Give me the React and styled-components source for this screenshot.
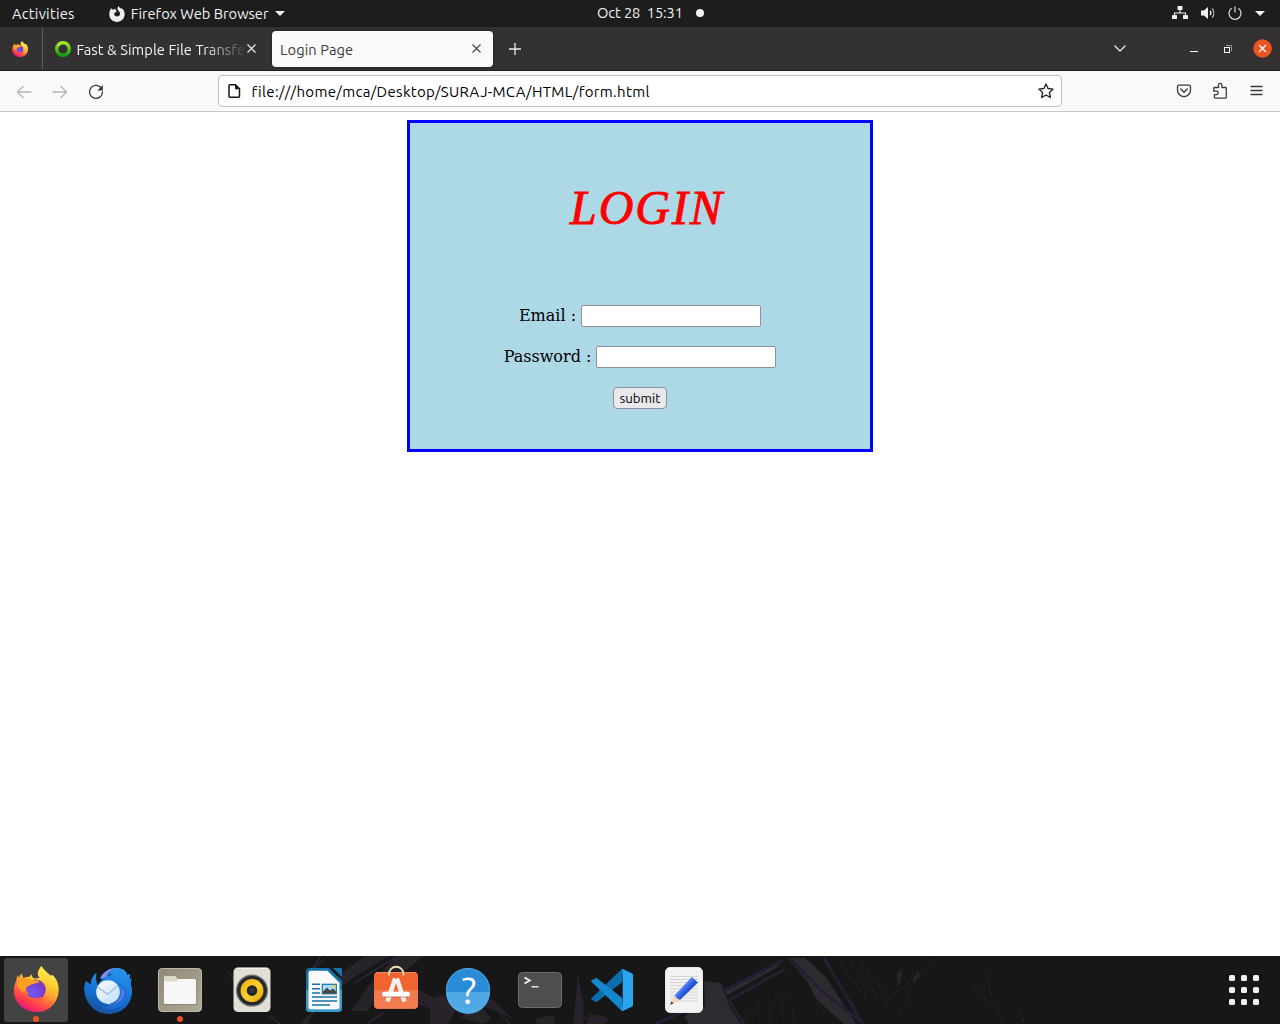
import React, { useId } from 'react';
import styled, { createGlobalStyle } from 'styled-components';

const GlobalStyle = createGlobalStyle`
  *, *::before, *::after { box-sizing: border-box; }
  body { margin: 0; background: #fff; font-family: Ubuntu, "Noto Sans", sans-serif; }
  svg { display: block; }
`;

const Desktop = styled.div`
  width: 1280px;
  height: 1024px;
  display: flex;
  flex-direction: column;
  overflow: hidden;
`;

const Label = styled.span`
  font-size: ${(p) => p.$size || 14}px;
  letter-spacing: ${(p) => p.$spacing || 0}px;
  line-height: 20px;
  white-space: pre;
  color: ${(p) => p.$color || '#f2f2f2'};
`;

/* ---------- System bar ---------- */

const SystemBar = styled.header`
  height: 27px;
  flex: none;
  background: #1d1d1d;
  display: grid;
  grid-template-columns: 597px 1fr 108px;
  align-items: center;
`;

const SystemLeft = styled.div`
  display: flex;
  align-items: center;
  padding-left: 12px;
`;

const AppMenu = styled.div`
  display: flex;
  align-items: center;
  gap: 6px;
  margin-left: 34px;
`;

const Clock = styled.div`
  display: flex;
  align-items: center;
  padding-bottom: 1px;
`;

const Dot = styled.i`
  width: 8px;
  height: 8px;
  border-radius: 50%;
  background: #f2f2f2;
  margin-left: 13px;
`;

const Tray = styled.div`
  display: flex;
  align-items: center;
  gap: 12.5px;
  padding-bottom: 1px;
`;

const Caret = () => (
  <svg width="10" height="5" viewBox="0 0 10 5"><path d="M0 0h10L5 5z" fill="#f2f2f2" /></svg>
);

/* ---------- Browser tabs ---------- */

const TabStrip = styled.nav`
  height: 44px;
  flex: none;
  background: #333132;
  border-bottom: 1px solid #1f1d1e;
  display: flex;
  align-items: center;
`;

const PinnedTab = styled.div`
  width: 43px;
  height: 43px;
  border-right: 1px solid #5b595a;
  display: flex;
  align-items: center;
  padding-left: 12px;
`;

const Tab = styled.div`
  display: flex;
  align-items: center;
  width: ${(p) => p.$width}px;
  height: 36px;
  margin-left: ${(p) => (p.$active ? 5 : 4)}px;
  padding: 0 ${(p) => (p.$active ? 12 : 11)}px 0 8px;
  border-radius: 4px;
  background: ${(p) => (p.$active ? '#f9f9f9' : 'transparent')};
  box-shadow: ${(p) => (p.$active ? '0 0 3px rgba(0,0,0,.5)' : 'none')};
`;

const TabTitle = styled.div`
  flex: 1;
  min-width: 0;
  height: 20px;
  display: flex;
  overflow: hidden;
  margin: 2px 3px 0 ${(p) => (p.$indent ? 5.5 : 0)}px;
  mask-image: ${(p) => (p.$fade ? 'linear-gradient(90deg,#000 76%,transparent 102%)' : 'none')};
`;

const Spacer = styled.div`
  flex: 1;
`;

const NewTab = styled.div`
  width: 43px;
  display: flex;
  justify-content: center;
`;

const WindowButtons = styled.div`
  display: flex;
  align-items: center;
  width: 103px;
  margin-left: 51px;
`;

const WindowButton = styled.button`
  width: 34px;
  height: 20px;
  padding: 0;
  border: 0;
  background: none;
  display: flex;
  align-items: center;
  justify-content: center;
`;

/* ---------- Toolbar ---------- */

const Toolbar = styled.div`
  height: 41px;
  flex: none;
  background: #f9f9f9;
  border-bottom: 1px solid #c8c8c8;
  display: flex;
  align-items: center;
  padding: 0 6px;
`;

const ToolButton = styled.button`
  width: 36px;
  height: 32px;
  border: 0;
  padding: ${(p) => p.$drop || 0}px 0 0;
  background: none;
  display: flex;
  align-items: center;
  justify-content: center;
`;

const UrlBar = styled.div`
  flex: 1;
  height: 32px;
  margin: 0 104px;
  padding: 0 7px 0 8px;
  border: 1px solid #bfbfbf;
  border-radius: 4px;
  background: #fff;
  display: flex;
  align-items: center;
`;

const UrlText = styled.div`
  flex: 1;
  display: flex;
  margin-left: 9.5px;
  padding-top: 1px;
`;

/* ---------- Page ---------- */

const Page = styled.main`
  flex: 1;
  background: #fff;
  padding-top: 8px;
`;

const LoginForm = styled.form`
  width: 466px;
  height: 332px;
  margin: 0 auto;
  border: 3px solid #00f;
  background: #add8e6;
  display: flex;
  flex-direction: column;
  align-items: center;
  font: 16px "DejaVu Serif", serif;
  color: #000;
`;

const Title = styled.h1`
  margin: 55px 0 67px 14px;
  font: italic 400 48px/60px Z003, "URW Chancery L", "Liberation Serif", serif;
  letter-spacing: 2px;
  color: #f00;
  -webkit-text-stroke: 0.9px #f00;
`;

const Field = styled.label`
  display: flex;
  align-items: center;
  gap: 5px;
  height: 22px;
  margin-bottom: 19px;
  line-height: 20px;
`;

const FieldText = styled.span`
  white-space: nowrap;
`;

const Input = styled.input`
  width: 180px;
  height: 22px;
  border: 1px solid #8f8f9d;
  border-radius: 2px;
  background: #fff;
  outline: none;
`;

const Submit = styled.button`
  width: 54px;
  height: 22px;
  padding: 1px 0 0;
  border: 1px solid #8f8f9d;
  border-radius: 4px;
  background: #e9e9ed;
  font: 13.33px/19px Ubuntu, "Noto Sans", sans-serif;
  color: #000;
`;

/* ---------- Dock ---------- */

const Dock = styled.footer`
  position: relative;
  height: 68px;
  flex: none;
  background: #171717;
  display: flex;
  align-items: center;
  padding: 0 4px;
  gap: 8px;
`;

const Wallpaper = styled.svg`
  position: absolute;
  inset: 0;
`;

const DockItem = styled.div`
  position: relative;
  width: 64px;
  height: 64px;
  border-radius: 3px;
  background: ${(p) => (p.$active ? '#434343' : 'transparent')};
  &::after {
    content: '';
    display: ${(p) => (p.$running ? 'block' : 'none')};
    position: absolute;
    left: 29px;
    bottom: 0;
    width: 6px;
    height: 6px;
    border-radius: 50%;
    background: #e95420;
  }
`;

const AppGrid = styled.div`
  position: relative;
  display: grid;
  grid-template-columns: repeat(3, 6px);
  gap: 6px;
  margin: 0 17px 0 auto;
`;

const GridDot = styled.i`
  height: 6px;
  border-radius: 1.5px;
  background: #f0f0f0;
`;

function FirefoxLogo({ size = 64, box = '0 0 64 64' }) {
  const id = useId().replace(/[^a-zA-Z0-9]/g, '');
  return (
    <svg width={size} height={size} viewBox={box}>
      <defs>
        <linearGradient id={`${id}a`} x1=".8" y1=".1" x2=".25" y2=".95">
          <stop offset="0" stopColor="#fff44f" /><stop offset=".3" stopColor="#ffbd2e" />
          <stop offset=".55" stopColor="#ff7139" /><stop offset=".8" stopColor="#ff3750" /><stop offset="1" stopColor="#e31587" />
        </linearGradient>
        <linearGradient id={`${id}b`} x1=".5" y1="0" x2=".3" y2="1">
          <stop offset="0" stopColor="#fff44f" /><stop offset=".5" stopColor="#ffcb34" /><stop offset="1" stopColor="#ff7b35" />
        </linearGradient>
        <radialGradient id={`${id}c`} cx=".35" cy=".65" r=".8">
          <stop offset="0" stopColor="#7059f5" /><stop offset=".6" stopColor="#7740cf" /><stop offset="1" stopColor="#a12b9f" />
        </radialGradient>
      </defs>
      <path d="M17.9 15.3c.1 2.4.8 3.4 1.7 4.6 2.1-1 4.5-1.4 6.1-1.1.3-1.2 1-2.1 1.8-2.6.2 2 .9 3.4 2.6 4.3l10-1 8.500-2.600c4 4.500 6 8.800 6 14.500C54.600 44.600 45 54 32.500 54S9.800 44.600 9.800 32.200c0-3.500 1-7.200 2.500-9.500.3-2.500.8-4.200 1.800-5.600l.8 3c.7-2 1.700-3.500 3-4.800z" fill={`url(#${id}a)`} />
      <circle cx="31.700" cy="31.600" r="10.200" fill={`url(#${id}c)`} />
      <path d="M37.700 8c-1.700 1.600-3.600 4.100-3.900 7.500-.3 3.300 3 5.500 5.500 8.500 3.500 4.100 3.600 9.300.7 13.500 3-1 4.600-3 5.300-4.600.5 4.500-2 9.500-7.300 12 6.500-.7 13.100-4.600 16-10.700C55.500 27 52.700 21 48.200 16.800c.4 1.600.5 2.600.3 3.700C46.400 15.700 40.600 14 37.700 8z" fill={`url(#${id}b)`} />
      <path d="M15 22c4-2.800 8-2.600 11.500-.3 1.200.3 3.200.2 9 1.200-.4 2.400-5.400 2.400-8.500 3.500-1 1.700-3.700 1-4.600 3.100-.7 2.300.6 5.400 2.800 6.500-4.500-.2-8.400-2.500-10.900-6.800-1.500-2.500-1.700-5.300.7-7.200z" fill="#ffa024" />
      <path d="M22.400 29.500c-1.800 6 3.100 11.200 9.100 10.700 2.700-.2 4.500-1.300 6.500-1.100-1.900 3.500-8.400 5-13 2.200-4.300-2.600-5.400-7.600-2.600-11.800z" fill="#ff5a38" />
    </svg>
  );
}

function Thunderbird() {
  return (
    <svg width="64" height="64" viewBox="0 0 64 64">
      <defs>
        <linearGradient id="tbBody" x1=".7" y1="0" x2=".4" y2="1"><stop offset="0" stopColor="#2795ee" /><stop offset=".55" stopColor="#1673d8" /><stop offset="1" stopColor="#15529e" /></linearGradient>
        <linearGradient id="tbMail" x1="0" y1="0" x2="1" y2="1"><stop offset="0" stopColor="#fff" /><stop offset="1" stopColor="#b9dcfa" /></linearGradient>
      </defs>
      <path d="M20.500 14.700c-4 3-6 7.300-5.600 12L10 22.800C8.200 26 7.600 31 8.700 35.500 10.800 47 20 56 32.500 56 46 56 56 46 56 33c0-2.400-.4-4.400-1.300-7l1-6-2 1.400.4-5.500-2.700 1.100c-1-5-6.200-7.300-11.900-7-6.800.4-10.900 4.200-12.500 9.200L24 20.500l3 .6c-2.500 1.600-4 3.500-5 6.200C20 24 19.700 20 20.500 14.700z" fill="url(#tbBody)" />
      <path d="M24 20.600c2.500-6 7.500-9.800 14.500-10.400-4.500 1.700-8 4.600-9 8.800-1 .2-3 1-5.500 1.600z" fill="#8f8cf0" />
      <path d="M40 25c9 3 8 15-3 22-3 1.700-7 2.500-11 .6 4 5 15 4.600 21-1.600 8-8 3.500-19-7-21z" fill="#1c6ed2" />
      <path d="M44 30c5 5-1 14-9 17 8-1 15-8 13-15z" fill="#8981e9" opacity=".65" />
      <circle cx="32" cy="34" r="11.800" fill="url(#tbMail)" />
      <path d="M21.500 29l10.200 7.400 10.200-9" fill="none" stroke="#9dbfe2" strokeWidth="1.300" />
      <path d="M27 43c2 2.200 4.500 3.300 8 3.700-2-1.700-3-3-3.500-4.700z" fill="#c9e3fb" />
      <circle cx="33.500" cy="16.500" r="1.400" fill="#103a80" /><circle cx="33" cy="16" r=".5" fill="#fff" />
    </svg>
  );
}

function Files() {
  return (
    <svg width="64" height="64" viewBox="0 0 64 64">
      <defs><linearGradient id="fileBg" x1="0" y1="0" x2="1" y2="1"><stop stopColor="#8f8878" /><stop offset="1" stopColor="#b1a996" /></linearGradient></defs>
      <rect x="10" y="10" width="44" height="44" rx="4.500" fill="url(#fileBg)" />
      <rect x="10.500" y="10.500" width="43" height="43" rx="4" fill="none" stroke="#c0b9a8" />
      <path d="M17 18h10l3 3h8v5H16v-7z" fill="#dedacb" />
      <path d="M16 24h13l3-3h15a1.500 1.500 0 011.500 1.500v23A1.500 1.500 0 0147 47H17.500a1.500 1.500 0 01-1.500-1.500z" fill="#6f695c" opacity=".5" />
      <path d="M16 23.500h12l3-2.500h15.500a1.500 1.500 0 011.500 1.500v22a1.500 1.500 0 01-1.500 1.500h-29a1.500 1.500 0 01-1.500-1.500z" fill="#f8f7f7" />
    </svg>
  );
}

function Speaker() {
  return (
    <svg width="64" height="64" viewBox="0 0 64 64">
      <defs><linearGradient id="spYel" x1="0" y1="0" x2="1" y2="1"><stop stopColor="#e9ae00" /><stop offset=".5" stopColor="#fbd034" /><stop offset="1" stopColor="#dda100" /></linearGradient></defs>
      <rect x="13.500" y="9.500" width="37" height="44.500" rx="4.500" fill="#e2dfd6" />
      <path d="M17 10.300h30" stroke="#fbfaf6" />
      <circle cx="32" cy="32.600" r="16" fill="#6d6d70" /><circle cx="32" cy="32.600" r="14.700" fill="#28282c" />
      <circle cx="32" cy="32.600" r="11.500" fill="url(#spYel)" />
      <circle cx="32" cy="32.600" r="5.300" fill="#242426" /><circle cx="32" cy="32.600" r="2.500" fill="#35353a" />
    </svg>
  );
}

function Writer() {
  return (
    <svg width="64" height="64" viewBox="0 0 64 64">
      <path d="M18 10h19l13 13v27a4 4 0 01-4 4H18a4 4 0 01-4-4V14a4 4 0 014-4z" fill="#156fa8" />
      <path d="M14 32h36v18a4 4 0 01-4 4H18a4 4 0 01-4-4z" fill="#3d9bcb" />
      <path d="M41 10h7.500a1.500 1.500 0 011.500 1.500V19z" fill="#1674aa" />
      <path d="M19 12.700h16.500l12 12V49a2.300 2.300 0 01-2.300 2.300H18.800A2.300 2.300 0 0116.500 49V15a2.300 2.300 0 012.500-2.300z" fill="#fafafa" />
      <path d="M20 26.300h8M20 30.700h8M20 35h8M20 39h25M20 43h25M20 47h18" stroke="#1672a8" strokeWidth="1.600" />
      <rect x="30.300" y="26.300" width="14" height="9.500" fill="#a9dcf4" stroke="#1672a8" strokeWidth="1.200" />
      <path d="M31 35.400v-2l4-4 3 3 3-2 3 3v2z" fill="#474747" /><path d="M41 27h3v3a3 3 0 01-3-3z" fill="#f4c430" />
    </svg>
  );
}

function Software() {
  return (
    <svg width="64" height="64" viewBox="0 0 64 64">
      <rect x="10" y="14" width="44" height="36.700" rx="4" fill="#f06430" />
      <path d="M10 32h44v14.700a4 4 0 01-4 4H14a4 4 0 01-4-4z" fill="#f27c50" />
      <path d="M12 14.600h40" stroke="#f98b62" />
      <path d="M25 17.500V16a7.200 7.200 0 0114.500 0v1.500" fill="none" stroke="#f2dfb1" strokeWidth="1.900" />
      <path d="M31.200 20.500L23.500 43.500M32.800 20.500L40.500 43.500" fill="none" stroke="#f7f1ee" strokeWidth="4.600" />
      <rect x="18" y="33.800" width="28" height="5" rx="2.500" fill="#fff" />
      <path d="M20 39h24" stroke="#bd5532" strokeWidth=".6" />
    </svg>
  );
}

function Help() {
  return (
    <svg width="64" height="64" viewBox="0 0 64 64">
      <circle cx="32" cy="32" r="22" fill="#2a8bd6" /><path d="M10 34h44a22 22 0 01-44 0z" fill="#50a8e4" />
      <circle cx="32" cy="32" r="21.500" fill="none" stroke="#59b2ea" strokeWidth=".8" />
      <text x="33" y="45.500" textAnchor="middle" fontFamily="Ubuntu, Noto Sans, sans-serif" fontSize="38" fill="#fff">?</text>
    </svg>
  );
}

function Terminal() {
  return (
    <svg width="64" height="64" viewBox="0 0 64 64">
      <rect x="10.500" y="14.500" width="43" height="35" rx="4" fill="#4e4e4e" stroke="#6b6b6b" />
      <path d="M16.500 19.500l5.500 3-5.500 3" fill="none" stroke="#fff" strokeWidth="1.500" />
      <path d="M23.500 28.800h7" stroke="#fff" strokeWidth="1.300" />
    </svg>
  );
}

function Code() {
  return (
    <svg width="64" height="64" viewBox="0 0 64 64">
      <path d="M11.400 40.200L41 11.800c.6-.6 1.500-.8 2.300-.5L42 24.200 17.300 43.400c-.8.6-1.700.6-2.400 0l-3.500-2c-.5-.4-.5-.8 0-1.200z" fill="#0b6cb0" />
      <path d="M11.400 23.800L41 52.200c.6.6 1.500.8 2.300.5L42 39.800 17.300 20.600c-.8-.6-1.700-.6-2.400 0l-3.500 2c-.5.4-.5.8 0 1.200z" fill="#1587cf" />
      <path d="M43.300 52.800c-.9.3-1.900 0-2.500-.7 1 .8 1.900.2 1.900-1V13c0-1.300-1-1.900-1.900-1 .7-.9 1.700-1.100 2.600-.7l8.300 3.900c.8.400 1.300 1 1.300 2v29.600c0 1-.5 1.600-1.300 2z" fill="#2aa5ee" />
    </svg>
  );
}

function Editor() {
  return (
    <svg width="64" height="64" viewBox="0 0 64 64">
      <rect x="13.500" y="9.500" width="37" height="45" rx="4.500" fill="#f3f3f3" stroke="#fff" strokeWidth=".8" />
      <path d="M18 18.500h28M18 21.500h28M18 24.500h28M18 27.700h28M18 30.800h28M18 34h28M18 37h28M18 40h28M18 43h28" stroke="#ccc" strokeWidth=".8" />
      <path d="M18.200 46.800l4-9.300 5.600 4.500z" fill="#f7d6b6" /><path d="M18.200 46.800l1.300-3.300 2 1.900z" fill="#343434" />
      <path d="M22.500 37.500L39.700 19l3 2.500-17.500 18.800z" fill="#4b7ff3" />
      <path d="M25 40l17.400-18.600 3.600 3L28 42z" fill="#2451cc" /><path d="M24.200 39.200L41.600 20.600l1.800 1.700L26.300 41z" fill="#3265e6" />
    </svg>
  );
}

const dockApps = [
  { name: 'firefox', Icon: FirefoxLogo, active: true, running: true },
  { name: 'mail', Icon: Thunderbird },
  { name: 'files', Icon: Files, running: true },
  { name: 'music', Icon: Speaker },
  { name: 'writer', Icon: Writer },
  { name: 'software', Icon: Software },
  { name: 'help', Icon: Help },
  { name: 'terminal', Icon: Terminal },
  { name: 'code', Icon: Code },
  { name: 'editor', Icon: Editor },
];

const Cross = ({ size = 9, color = '#eee', width = 1.1 }) => (
  <svg width={size} height={size} viewBox="0 0 9 9"><path d="M.5.500l8 8M8.500.500l-8 8" stroke={color} strokeWidth={width} /></svg>
);

const lineProps = { fill: 'none', stroke: '#3a3a40', strokeWidth: 1.3, strokeLinecap: 'round', strokeLinejoin: 'round' };

function TopBar() {
  return (
    <SystemBar>
      <SystemLeft>
        <Label $size={14.67} $spacing={0.26}>Activities</Label>
        <AppMenu>
          <svg width="16" height="16" viewBox="0 0 16 16">
            <path d="M2.300 2.200l1.400 1.500c.7-.4 1.400-.5 2-.4l1-1-.2 2L8 5.300 6.300 6.600c-1 .3-1.300.8-1.100 1.700.3 1.400 1.500 2.200 2.900 2.200 1.800 0 3-1.300 2.900-3-.1-1.500-1-2.200-1.800-3C8 3.300 8.400 1.300 9.700 0c.5 1.700 1.600 2 2.500 3l.3-1c2 1.600 3.200 3.500 3.200 6.300 0 4.400-3.500 7.600-7.700 7.600S.3 12.700.3 8.500c0-2.500.7-4.700 2-6.300z" fill="#eee" />
          </svg>
          <Label $size={14.67}>Firefox Web Browser</Label>
          <Caret />
        </AppMenu>
      </SystemLeft>
      <Clock><Label $size={14.67} $spacing={-0.1}>{'Oct 28  15:31'}</Label><Dot /></Clock>
      <Tray>
        <svg width="16" height="14" viewBox="0 0 16 14">
          <path d="M8 4v3M2.500 10V7h11v3" fill="none" stroke="#f2f2f2" strokeWidth="1.100" />
          <rect x="5.500" y="0" width="5" height="4" rx=".7" fill="#f2f2f2" /><rect x="0" y="9" width="5" height="4" rx=".7" fill="#f2f2f2" /><rect x="11" y="9" width="5" height="4" rx=".7" fill="#f2f2f2" />
        </svg>
        <svg width="15" height="14" viewBox="0 0 15 14">
          <path d="M0 4.500h3L7 1v12L3 9.500H0z" fill="#f2f2f2" />
          <path d="M9 5a3 3 0 010 4.200" fill="none" stroke="#f2f2f2" strokeWidth="1.200" /><path d="M11.200 2.500a7 7 0 010 9" fill="none" stroke="#bbb" strokeWidth="1.200" />
        </svg>
        <svg width="14" height="14" viewBox="0 0 14 14"><path d="M7 .500v6M3.700 2.300a6 6 0 106.600 0" fill="none" stroke="#ddd" strokeWidth="1.200" /></svg>
        <Caret />
      </Tray>
    </SystemBar>
  );
}

function Tabs() {
  return (
    <TabStrip>
      <PinnedTab><FirefoxLogo size={16} box="9 8 46 46" /></PinnedTab>
      <Tab $width={220}>
        <svg width="16" height="16" viewBox="0 0 16 16">
          <defs><linearGradient id="ring" x1="0" y1="0" x2="0" y2="1"><stop stopColor="#a4e62a" /><stop offset="1" stopColor="#169b12" /></linearGradient></defs>
          <circle cx="8" cy="8" r="6.300" fill="none" stroke="url(#ring)" strokeWidth="3.400" /><path d="M3.600 4.800l2-1.800" stroke="#e8fbc5" strokeWidth=".8" />
        </svg>
        <TabTitle $indent $fade><Label $size={14.67} $spacing={0.08}>Fast &amp; Simple File Transfe</Label></TabTitle>
        <Cross />
      </Tab>
      <Tab $width={221} $active>
        <TabTitle><Label $size={14.67} $spacing={0.08} $color="#3b3b3b">Login Page</Label></TabTitle>
        <Cross color="#444" />
      </Tab>
      <NewTab><svg width="12" height="12" viewBox="0 0 12 12"><path d="M6 0v12M0 6h12" stroke="#eee" strokeWidth="1.300" /></svg></NewTab>
      <Spacer />
      <svg width="12" height="7" viewBox="0 0 12 7"><path d="M.500.500L6 6 11.500.500" fill="none" stroke="#e5e5e5" strokeWidth="1.300" /></svg>
      <WindowButtons>
        <WindowButton><svg width="8" height="8" viewBox="0 0 8 8"><path d="M0 6.500h8" stroke="#fff" /></svg></WindowButton>
        <WindowButton>
          <svg width="8" height="8" viewBox="0 0 8 8"><path d="M2 .500h5.500V6" fill="none" stroke="#999" /><rect x=".500" y="2.500" width="5" height="5" fill="none" stroke="#fff" /></svg>
        </WindowButton>
        <WindowButton>
          <svg width="19" height="19" viewBox="0 0 19 19"><circle cx="9.500" cy="9.500" r="9.300" fill="#e95420" /><path d="M6 6l7 7M13 6l-7 7" stroke="#fff" strokeWidth="1.400" /></svg>
        </WindowButton>
      </WindowButtons>
    </TabStrip>
  );
}

function Navigation() {
  return (
    <Toolbar>
      <ToolButton $drop={1}><svg width="16" height="16" viewBox="0 0 16 16"><path d="M15 8H1.500M7 2.500L1.500 8 7 13.500" {...lineProps} stroke="#b5b5b8" /></svg></ToolButton>
      <ToolButton $drop={1}><svg width="16" height="16" viewBox="0 0 16 16"><path d="M1 8h13.500M9 2.500L14.500 8 9 13.500" {...lineProps} stroke="#b5b5b8" /></svg></ToolButton>
      <ToolButton $drop={1}><svg width="16" height="16" viewBox="0 0 16 16"><path d="M12.800 3.500a6.500 6.500 0 101.700 4.500" {...lineProps} /><path d="M14.900 1v5.500H9.400z" fill="#3a3a40" /></svg></ToolButton>
      <UrlBar>
        <svg width="15" height="16" viewBox="0 0 15 16"><path d="M3 1.700h5.500l4 4v7.600a1 1 0 01-1 1H3a1 1 0 01-1-1V2.700a1 1 0 011-1z" fill="none" stroke="#151515" strokeWidth="1.500" /><path d="M8 1.500v4.700h4.700z" fill="#151515" /></svg>
        <UrlText><Label $size={15} $spacing={0.32} $color="#000">file:///home/mca/Desktop/SURAJ-MCA/HTML/form.html</Label></UrlText>
        <svg width="16" height="16" viewBox="0 0 16 16"><path d="M8 .900l2.100 4.600 5 .6-3.700 3.400 1 5L8 12l-4.400 2.500 1-5L.900 6.100l5-.6z" {...lineProps} stroke="#222" /></svg>
      </UrlBar>
      <ToolButton><svg width="16" height="16" viewBox="0 0 16 16"><path d="M3 2.200h10a1.500 1.500 0 011.500 1.500v3.500a6.500 6.500 0 01-13 0V3.700A1.500 1.500 0 013 2.200zM4.700 6L8 9.200 11.300 6" {...lineProps} /></svg></ToolButton>
      <ToolButton><svg width="16" height="18" viewBox="0 0 16 18"><path d="M6.500 5.500V3a1.700 1.700 0 013.400 0v2.500h3.600a.8.800 0 01.8.800v9a.8.800 0 01-.8.800H3.200a.8.800 0 01-.8-.8v-2.600h2a1.700 1.700 0 000-3.500H1.800V6.300a.8.800 0 01.8-.8z" {...lineProps} /></svg></ToolButton>
      <ToolButton><svg width="13" height="12" viewBox="0 0 13 12"><path d="M1 1.500h11M1 5.500h11M1 9.500h11" {...lineProps} /></svg></ToolButton>
    </Toolbar>
  );
}

function DockWallpaper() {
  return (
    <Wallpaper width="1280" height="68" viewBox="0 0 1280 68" fill="none">
      <path d="M228 15l18 28M270 60l10 8M325 3l-18 15" stroke="#26242a" strokeWidth="2" />
      <path d="M300 68l27-28 35-24 28-16h-25l-30 22-28 46zM396 0h28l-37 29-20 26h-16l17-25zM410 30l27 13-2 9-27-12z" fill="#262329" />
      <path d="M309 18l12-18M383 57l-16 11M354 27l44-27M417 46l23 9" stroke="#2c2138" strokeWidth="2" />
      <path d="M430 45l12-7 17 8-10 22h-19zM460 62l19-14 12 15-7 5zM484 50l8-7 20 19zM573 68l5-47 6 28-1 19zM536 63l18-4 1 9h-18zM590 58l17 3-2 7h-18z" fill="#272329" />
      <path d="M486 42l24 26M578 21v47M583 62l26 3" stroke="#2e203a" strokeWidth="1.500" />
      <path d="M704 25l17 2 8 23 12 18h-52l-5-8 21-10zM726 32l55-28-5 8-50 28zM787 2h18l20 18 31 48h-12l-28-25-9-18z" fill="#2d2a30" />
      <path d="M724 35l59-31M731 43l54-30M728 43l16 25M789 2l37 37 37 28M824 2l39 66M655 68l32-14" stroke="#281e34" strokeWidth="3" />
      <path d="M692 12l4 8M817 47l11 12M840 7l28 38M850 7l30 36M861 8l30 36M885 50l16-20M899 57l13-22M905 36l8-20M924 15l14-14M987 18l4 23 3 5M973 28l18 21M998 52l5 16M1020 54l4 12" stroke="#29282c" strokeWidth="1" strokeDasharray="5 3" />
      <path d="M897 17l5-4v12l-5 5zM913 21l5-6 3 5-8 8z" fill="#252328" />
      <path d="M748 47v21M758 42l2 26M768 39l3 29M780 37l4 31M791 36l4 32" stroke="#202022" strokeDasharray="2 2" />
    </Wallpaper>
  );
}

export default function App() {
  return (
    <Desktop>
      <GlobalStyle />
      <TopBar />
      <Tabs />
      <Navigation />
      <Page>
        <LoginForm onSubmit={(e) => e.preventDefault()}>
          <Title>LOGIN</Title>
          <Field><FieldText>Email :</FieldText><Input type="email" /></Field>
          <Field><FieldText>Password :</FieldText><Input type="password" /></Field>
          <Submit type="submit">submit</Submit>
        </LoginForm>
      </Page>
      <Dock>
        <DockWallpaper />
        {dockApps.map(({ name, Icon, active, running }) => (
          <DockItem key={name} $active={active} $running={running}><Icon /></DockItem>
        ))}
        <AppGrid>{Array.from({ length: 9 }, (_, i) => <GridDot key={i} />)}</AppGrid>
      </Dock>
    </Desktop>
  );
}
